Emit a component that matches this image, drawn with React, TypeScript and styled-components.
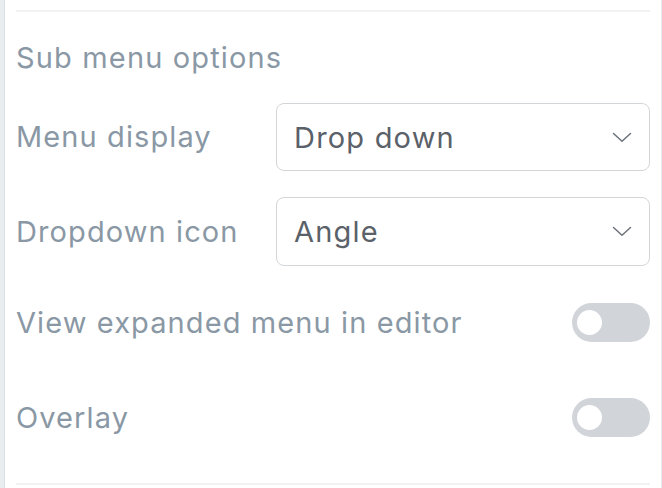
import React from "react";
import styled, { createGlobalStyle } from "styled-components";

const Global = createGlobalStyle`
  html, body { margin: 0; padding: 0; background: #ffffff; }
  body { font-family: Inter, "Open Sans", sans-serif; }
  * { box-sizing: border-box; }
`;

const Frame = styled.div`
  display: flex;
  width: 662px;
  height: 488px;
  background: #ffffff;
`;

const EdgeStrip = styled.div`
  width: 5px;
  background: #e8edef;
  border-right: 1px solid #dae1e4;
`;

const Panel = styled.div`
  flex: 1;
  display: flex;
  flex-direction: column;
  padding: 10px 11px 0 11px;
  border-right: 1px solid #e9ecee;
`;

const Divider = styled.div<{ $top?: number }>`
  height: 2px;
  background: #f0f2f3;
  margin-top: ${(p) => p.$top ?? 0}px;
`;

const Heading = styled.div`
  margin-top: 28px;
  font-size: 29px;
  line-height: 36px;
  color: #8a98a5;
  letter-spacing: 1.15px;
`;

const Row = styled.div<{ $top: number; $h: number }>`
  display: flex;
  align-items: center;
  justify-content: space-between;
  height: ${(p) => p.$h}px;
  margin-top: ${(p) => p.$top}px;
`;

const Label = styled.div`
  font-size: 29px;
  line-height: 36px;
  color: #8a98a5;
  letter-spacing: 1.1px;
  white-space: nowrap;
`;

const Select = styled.div`
  width: 374px;
  height: 100%;
  display: flex;
  align-items: center;
  justify-content: space-between;
  padding: 0 17px 0 17px;
  border: 1.5px solid #d3d6d9;
  border-radius: 8px;
  font-size: 29px;
  letter-spacing: 1.2px;
  color: #5a6169;
`;

const Chevron = () => (
  <svg width="20" height="11" viewBox="0 0 20 11" fill="none">
    <path d="M1.5 1.5 L10 9.3 L18.5 1.5" stroke="#6c7279" strokeWidth="1.5" strokeLinecap="round" strokeLinejoin="round" />
  </svg>
);

const Toggle = styled.div`
  position: relative;
  width: 78px;
  height: 39px;
  border-radius: 20px;
  background: #d1d5d9;
  &::after {
    content: "";
    position: absolute;
    left: 5px;
    top: 7px;
    width: 25px;
    height: 25px;
    border-radius: 50%;
    background: #ffffff;
  }
`;

export default function App() {
  return (
    <Frame>
      <Global />
      <EdgeStrip />
      <Panel>
        <Divider />
        <Heading>Sub menu options</Heading>
        <Row $top={27} $h={68}>
          <Label>Menu display</Label>
          <Select>
            <span>Drop down</span>
            <Chevron />
          </Select>
        </Row>
        <Row $top={26} $h={69}>
          <Label>Dropdown icon</Label>
          <Select>
            <span>Angle</span>
            <Chevron />
          </Select>
        </Row>
        <Row $top={18} $h={77}>
          <Label>View expanded menu in editor</Label>
          <Toggle />
        </Row>
        <Row $top={18} $h={77}>
          <Label>Overlay</Label>
          <Toggle />
        </Row>
        <Divider $top={27} />
      </Panel>
    </Frame>
  );
}
